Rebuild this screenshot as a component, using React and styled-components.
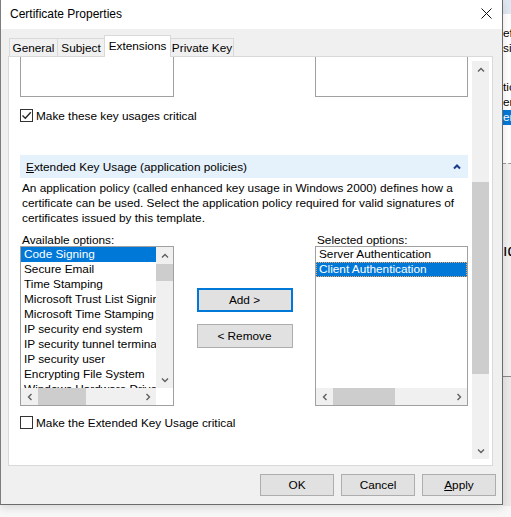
import styled, { createGlobalStyle } from "styled-components";

const GlobalStyle = createGlobalStyle`
  html, body {
    margin: 0;
    padding: 0;
  }
  body {
    background: #f7f7f7;
    font-family: "Liberation Sans", Arial, sans-serif;
    font-size: 11.8px;
    color: #000;
  }
`;

const AVAILABLE = [
  "Code Signing",
  "Secure Email",
  "Time Stamping",
  "Microsoft Trust List Signing",
  "Microsoft Time Stamping",
  "IP security end system",
  "IP security tunnel termination",
  "IP security user",
  "Encrypting File System",
  "Windows Hardware Driver Verification",
];

const SELECTED = ["Server Authentication", "Client Authentication"];

const Chevron = ({ dir = "up", color = "#606060", size = 8, weight = 1.4 }) => {
  const rot = { up: 0, right: 90, down: 180, left: 270 }[dir];
  return (
    <svg width={size} height={size} viewBox="0 0 8 8" style={{ transform: `rotate(${rot}deg)` }}>
      <path d="M1 5.5 L4 2.5 L7 5.5" fill="none" stroke={color} strokeWidth={weight} />
    </svg>
  );
};

const VScroll = ({ thumbTop, thumbSize }) => (
  <VBar>
    <Arrow>
      <Chevron dir="up" />
    </Arrow>
    <VTrack>
      <VThumb $top={thumbTop} $size={thumbSize} />
    </VTrack>
    <Arrow>
      <Chevron dir="down" />
    </Arrow>
  </VBar>
);

const HScroll = ({ thumbLeft, thumbSize }) => (
  <HBar>
    <Arrow>
      <Chevron dir="left" />
    </Arrow>
    <HTrack>
      <HThumb $left={thumbLeft} $size={thumbSize} />
    </HTrack>
    <Arrow>
      <Chevron dir="right" />
    </Arrow>
  </HBar>
);

const CheckBox = ({ checked, gap = 12, children }) => (
  <CheckRow $mt={gap}>
    <Box>
      {checked && (
        <svg width="11" height="11" viewBox="0 0 11 11">
          <path d="M1.5 5.5 L4.3 8.3 L9.8 2.2" fill="none" stroke="#222" strokeWidth="1.3" />
        </svg>
      )}
    </Box>
    <span>{children}</span>
  </CheckRow>
);

const App = () => {
  return (
    <>
      <GlobalStyle />
      <Desktop>
        <BehindWindow>
          <BehindTop />
          <BehindLine $mt={12}>ef</BehindLine>
          <BehindLine>si</BehindLine>
          <BehindLine $mt={24}>tio</BehindLine>
          <BehindLine>er</BehindLine>
          <BehindLine $sel>en</BehindLine>
          <BehindGap />
          <BehindGrey>
            <BehindBig>ıd</BehindBig>
          </BehindGrey>
          <BehindBottom />
        </BehindWindow>

        <Dialog>
          <TitleBar>
            <Title>Certificate Properties</Title>
            <Close>
              <svg width="11" height="11" viewBox="0 0 11 11">
                <path d="M0.5 0.5 L10.5 10.5 M10.5 0.5 L0.5 10.5" stroke="#111" strokeWidth="1" />
              </svg>
            </Close>
          </TitleBar>

          <Body>
            <Tabs>
              <Tab $w={49}>General</Tab>
              <Tab $w={48}>Subject</Tab>
              <Tab $w={67} $active>
                Extensions
              </Tab>
              <Tab $w={64}>Private Key</Tab>
            </Tabs>

            <Panel>
              <Content>
                <Stubs>
                  <Stub $w={154} />
                  <Stub $w={153} />
                </Stubs>

                <CheckBox checked>Make these key usages critical</CheckBox>

                <SectionHeader>
                  <span>
                    <u>E</u>xtended Key Usage (application policies)
                  </span>
                  <Chevron dir="up" color="#1a3a8a" size={8} weight={2} />
                </SectionHeader>

                <Description>
                  An application policy (called enhanced key usage in Windows 2000) defines how a
                  <br />
                  certificate can be used. Select the application policy required for valid signatures of
                  <br />
                  certificates issued by this template.
                </Description>

                <Picker>
                  <FieldLabel>Available options:</FieldLabel>
                  <span />
                  <FieldLabel>Selected options:</FieldLabel>

                  <ListBox $cols="1fr 17px">
                    <Items>
                      {AVAILABLE.map((item, i) => (
                        <Item key={item} $selected={i === 0}>
                          {item}
                        </Item>
                      ))}
                    </Items>
                    <VScroll thumbTop={0} thumbSize={17} />
                    <HScroll thumbLeft={0} thumbSize={48} />
                    <Corner />
                  </ListBox>

                  <Actions>
                    <WinButton $default>Add &gt;</WinButton>
                    <WinButton>&lt; Remove</WinButton>
                  </Actions>

                  <ListBox $cols="1fr">
                    <Items>
                      {SELECTED.map((item, i) => (
                        <Item key={item} $selected={i === 1} $focused={i === 1}>
                          {item}
                        </Item>
                      ))}
                    </Items>
                    <HScroll thumbLeft={0} thumbSize={62} />
                  </ListBox>
                </Picker>

                <CheckBox gap={10}>Make the Extended Key Usage critical</CheckBox>
              </Content>
              <PanelScroll>
                <VScroll thumbTop={104} thumbSize={192} />
              </PanelScroll>
            </Panel>

            <Footer>
              <FooterButton>OK</FooterButton>
              <FooterButton>Cancel</FooterButton>
              <FooterButton>
                <u>A</u>pply
              </FooterButton>
            </Footer>
          </Body>
        </Dialog>
      </Desktop>
    </>
  );
};

const Desktop = styled.div`
  position: relative;
  width: 511px;
  height: 517px;
  overflow: hidden;
  background: #f7f7f7;
`;

/* window peeking out behind the dialog */
const BehindWindow = styled.div`
  position: absolute;
  left: 503px;
  top: 0;
  width: 60px;
  height: 506px;
  background: #fff;
  display: flex;
  flex-direction: column;
  overflow: hidden;
`;

const BehindTop = styled.div`
  height: 14px;
  background: #dfe7f0;
`;

const BehindLine = styled.div`
  height: 15px;
  line-height: 15px;
  margin-top: ${(p) => p.$mt || 0}px;
  white-space: nowrap;
  background: ${(p) => (p.$sel ? "#0078d7" : "transparent")};
  color: ${(p) => (p.$sel ? "#fff" : "#000")};
`;

const BehindGap = styled.div`
  height: 22px;
`;

const BehindGrey = styled.div`
  height: 213px;
  background: #f0f0f0;
  border-top: 1px dashed #9a9a9a;
  margin-top: 16px;
  padding-top: 78px;
  box-sizing: border-box;
`;

const BehindBig = styled.div`
  font-size: 16px;
  line-height: 18px;
`;

const BehindBottom = styled.div`
  flex: 1;
  background: #e9e9e9;
  border-top: 1px solid #8a8a8a;
`;

const Dialog = styled.div`
  position: absolute;
  left: 0;
  top: 0;
  width: 503px;
  height: 505px;
  box-sizing: border-box;
  border-left: 1px solid #7d7d7d;
  border-right: 1px solid #6b6b6b;
  border-bottom: 1px solid #6b6b6b;
  background: #f0f0f0;
  box-shadow: 0 3px 8px rgba(0, 0, 0, 0.12);
  display: flex;
  flex-direction: column;
`;

const TitleBar = styled.div`
  height: 29px;
  background: #fff;
  display: flex;
  align-items: center;
  justify-content: space-between;
  padding-left: 9px;
`;

const Title = styled.div`
  font-size: 12px;
  margin-top: -1px;
`;

const Close = styled.div`
  width: 31px;
  height: 29px;
  display: flex;
  align-items: center;
  justify-content: center;
  margin-top: -3px;
`;

const Body = styled.div`
  flex: 1;
  display: flex;
  flex-direction: column;
  padding: 7px 0 0 7px;
`;

const Tabs = styled.div`
  display: flex;
  align-items: flex-end;
  height: 21px;
  padding-left: 2px;
  margin-bottom: -1px;
  position: relative;
  z-index: 1;
`;

const Tab = styled.div`
  width: ${(p) => p.$w}px;
  height: ${(p) => (p.$active ? 22 : 19)}px;
  box-sizing: border-box;
  margin-left: -1px;
  border: 1px solid #d9d9d9;
  border-bottom: ${(p) => (p.$active ? "none" : "1px solid #d9d9d9")};
  background: ${(p) => (p.$active ? "#fff" : "#f0f0f0")};
  display: flex;
  justify-content: center;
  align-items: ${(p) => (p.$active ? "flex-start" : "center")};
  padding-top: ${(p) => (p.$active ? 3 : 1)}px;
  white-space: nowrap;
  position: relative;
  z-index: ${(p) => (p.$active ? 2 : 1)};
`;

const Panel = styled.div`
  height: 410px;
  box-sizing: border-box;
  margin-right: 9px;
  border: 1px solid #d9d9d9;
  background: #fff;
  display: flex;
  padding-right: 3px;
`;

const Content = styled.div`
  flex: 1;
  overflow: hidden;
  padding: 0 4px 0 11px;
  display: flex;
  flex-direction: column;
`;

const PanelScroll = styled.div`
  display: flex;
  margin: 4px 0 6px;
`;

const Stubs = styled.div`
  display: flex;
  justify-content: space-between;
  height: 40px;
`;

const Stub = styled.div`
  width: ${(p) => p.$w}px;
  box-sizing: border-box;
  border: 1px solid #a0a0a0;
  border-top: none;
`;

const CheckRow = styled.label`
  display: flex;
  align-items: center;
  gap: 3px;
  height: 13px;
  margin-top: ${(p) => p.$mt}px;
  white-space: nowrap;

  & + * {
    margin-top: 33px;
  }
`;

const Box = styled.span`
  width: 13px;
  height: 13px;
  box-sizing: border-box;
  border: 1px solid #333;
  background: #fff;
  display: flex;
  align-items: center;
  justify-content: center;
`;

const SectionHeader = styled.div`
  height: 23px;
  background: #e5f1fb;
  display: flex;
  align-items: center;
  justify-content: space-between;
  padding: 0 7px 0 6px;
`;

const Description = styled.p`
  margin: 3px 0 0 2px;
  line-height: 15px;
  white-space: nowrap;
`;

const Picker = styled.div`
  display: grid;
  grid-template-columns: 154px 1fr 153px;
  grid-template-rows: 14px 160px;
  margin-top: 6px;
`;

const FieldLabel = styled.div`
  line-height: 14px;
  padding-left: 2px;
  padding-top: 1px;
  white-space: nowrap;
`;

const ListBox = styled.div`
  box-sizing: border-box;
  border: 1px solid #a0a0a0;
  background: #fff;
  display: grid;
  grid-template-columns: ${(p) => p.$cols};
  grid-template-rows: 1fr 17px;
  overflow: hidden;
  min-width: 0;

  & > :last-child:nth-child(2) {
    grid-column: 1 / -1;
  }
`;

const Items = styled.div`
  overflow: hidden;
  min-width: 0;
`;

const Item = styled.div`
  height: 15px;
  line-height: 15px;
  padding-left: 3px;
  white-space: nowrap;
  overflow: hidden;
  background: ${(p) => (p.$selected ? "#0078d7" : "transparent")};
  color: ${(p) => (p.$selected ? "#fff" : "#000")};
  outline: ${(p) => (p.$focused ? "1px dotted #f0a860" : "none")};
  outline-offset: -1px;
`;

const VBar = styled.div`
  width: 17px;
  background: #f0f0f0;
  display: flex;
  flex-direction: column;
`;

const HBar = styled.div`
  height: 17px;
  background: #f0f0f0;
  display: flex;
`;

const Arrow = styled.div`
  width: 17px;
  height: 17px;
  flex: none;
  display: flex;
  align-items: center;
  justify-content: center;
`;

const VTrack = styled.div`
  flex: 1;
`;

const VThumb = styled.div`
  margin: ${(p) => p.$top}px auto 0;
  width: 17px;
  height: ${(p) => p.$size}px;
  background: #cdcdcd;
`;

const HTrack = styled.div`
  flex: 1;
  display: flex;
`;

const HThumb = styled.div`
  margin-left: ${(p) => p.$left}px;
  width: ${(p) => p.$size}px;
  height: 17px;
  background: #cdcdcd;
`;

const Corner = styled.div`
  background: #fff;
`;

const Actions = styled.div`
  display: flex;
  flex-direction: column;
  align-items: center;
  gap: 12px;
  padding-top: 42px;
`;

const WinButton = styled.button`
  width: 96px;
  height: 24px;
  box-sizing: border-box;
  background: #e1e1e1;
  border: ${(p) => (p.$default ? "2px solid #0078d7" : "1px solid #adadad")};
  font: inherit;
  color: #000;
  padding: 0;
  margin: 0;
`;

const Footer = styled.div`
  display: flex;
  justify-content: flex-end;
  gap: 7px;
  padding: 8px 6px 0 0;
`;

const FooterButton = styled(WinButton)`
  width: 74px;
  height: 22px;
`;

export default App;
